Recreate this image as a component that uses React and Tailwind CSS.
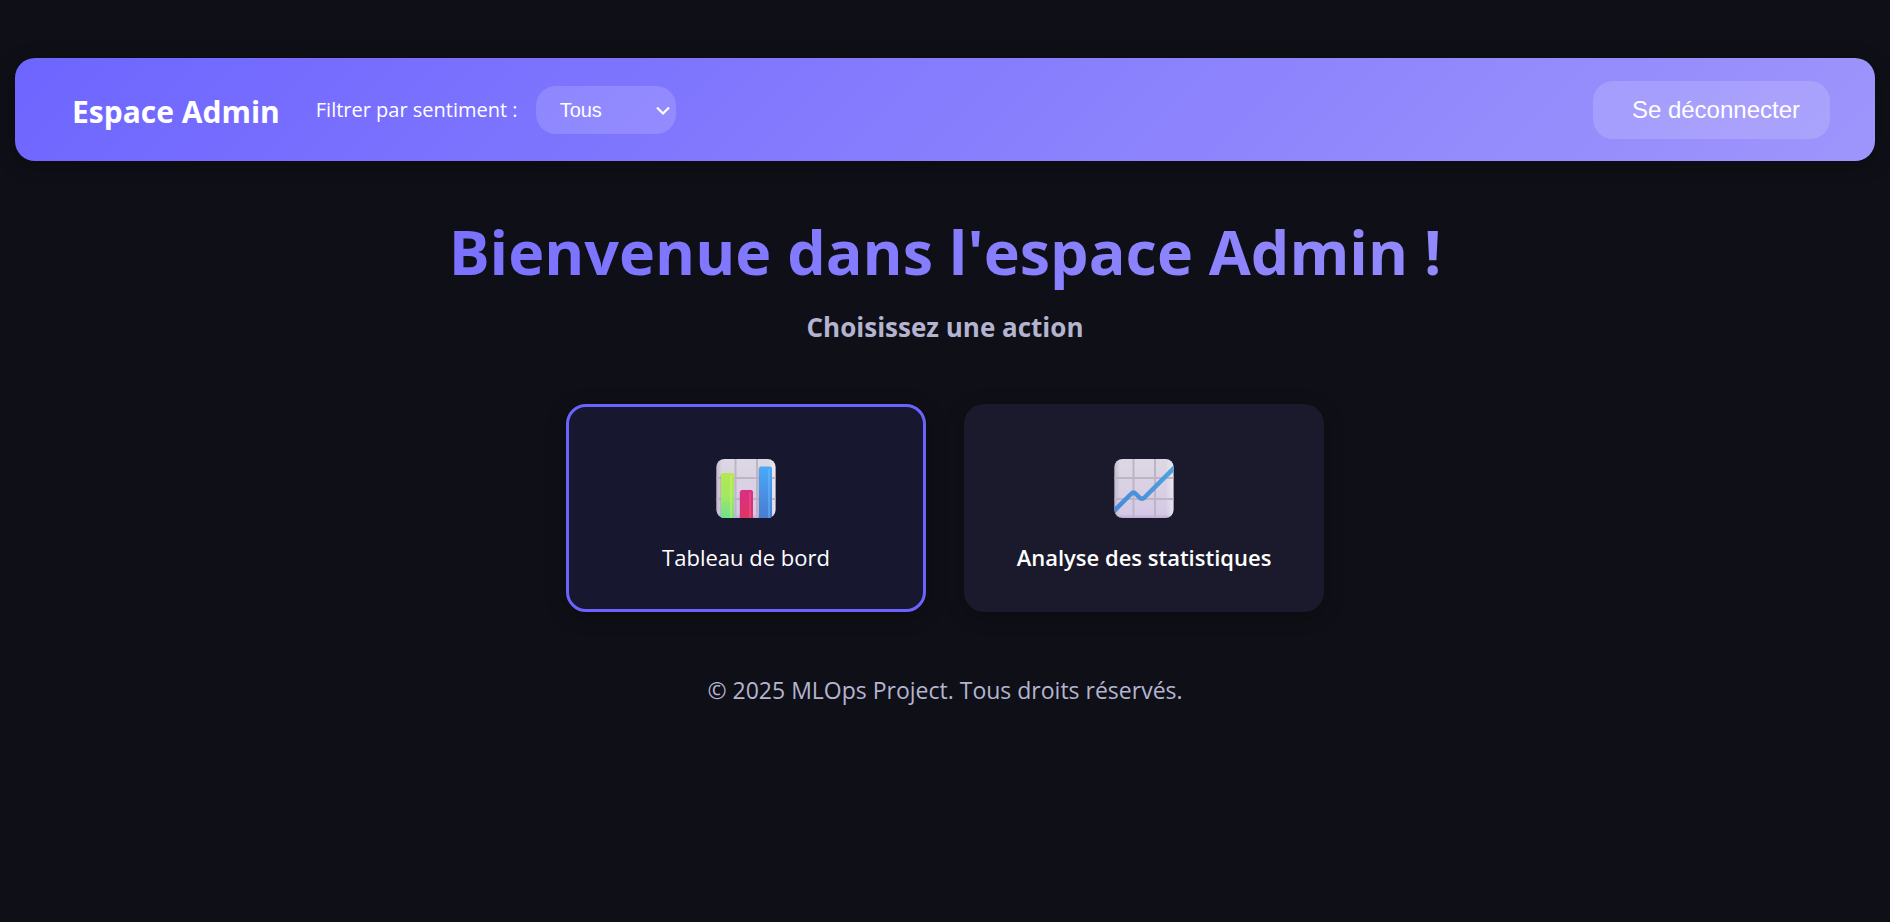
function GridTile({ id, children }) {
  return (
    <svg viewBox="0 0 60 60" className="size-15" aria-hidden="true">
      <defs>
        <linearGradient id={`${id}-bg`} x1="0" y1="0" x2="0" y2="1">
          <stop offset="0" stopColor="#dcd8e2" />
          <stop offset="0.5" stopColor="#d9d0e4" />
          <stop offset="0.92" stopColor="#d5c8e6" />
          <stop offset="1" stopColor="#b9a2d2" />
        </linearGradient>
        <linearGradient id={`${id}-side`} x1="0" y1="0" x2="1" y2="0">
          <stop offset="0" stopColor="#b5adbf" stopOpacity="0.7" />
          <stop offset="0.1" stopColor="#b5adbf" stopOpacity="0" />
          <stop offset="0.86" stopColor="#fff" stopOpacity="0" />
          <stop offset="1" stopColor="#fff" stopOpacity="0.5" />
        </linearGradient>
        <linearGradient id={`${id}-green`} x1="0" y1="14" x2="0" y2="60" gradientUnits="userSpaceOnUse">
          <stop offset="0" stopColor="#b4e84f" />
          <stop offset="0.5" stopColor="#a2e862" />
          <stop offset="1" stopColor="#6fdf8d" />
        </linearGradient>
        <linearGradient id={`${id}-red`} x1="0" y1="31" x2="0" y2="60" gradientUnits="userSpaceOnUse">
          <stop offset="0" stopColor="#d92f86" />
          <stop offset="1" stopColor="#dd3560" />
        </linearGradient>
        <linearGradient id={`${id}-blue`} x1="0" y1="8" x2="0" y2="60" gradientUnits="userSpaceOnUse">
          <stop offset="0" stopColor="#4aa8f8" />
          <stop offset="1" stopColor="#487bd0" />
        </linearGradient>
        <linearGradient id={`${id}-line`} x1="0" y1="1" x2="1" y2="0">
          <stop offset="0" stopColor="#4688d8" />
          <stop offset="1" stopColor="#4fa3de" />
        </linearGradient>
        <clipPath id={`${id}-clip`}>
          <rect x="0.5" y="0" width="59" height="59" rx="8" />
        </clipPath>
      </defs>
      <g clipPath={`url(#${id}-clip)`}>
        <rect width="60" height="60" fill={`url(#${id}-bg)`} />
        <rect width="60" height="60" fill={`url(#${id}-side)`} />
        <path d="M19.5 0V60M41 0V60M0 19H60M0 40H60" stroke="#bdb5c4" strokeWidth="2" />
        {children}
      </g>
    </svg>
  );
}

function BarChartIcon() {
  const bars = [
    { x: 5, y: 14, fill: "green", light: "#d0f47c" },
    { x: 24, y: 31, fill: "red", light: "#ee5f93" },
    { x: 43, y: 7.5, fill: "blue", light: "#6dc0ff" },
  ];
  return (
    <GridTile id="bars">
      {bars.map((b) => (
        <g key={b.fill}>
          <rect x={b.x - 1} y={b.y + 1} width="14" height="60" rx="2.5" fill="#8d83a0" opacity="0.3" />
          <rect x={b.x} y={b.y} width="13" height="60" rx="2.2" fill={`url(#bars-${b.fill})`} />
          <rect x={b.x + 9} y={b.y + 2} width="2" height="60" rx="1" fill={b.light} opacity="0.45" />
        </g>
      ))}
    </GridTile>
  );
}

function LineChartIcon() {
  return (
    <GridTile id="trend">
      <path
        d="M-2 54L17 35Q19.500 32.500 22 35L25.500 38.500Q28 41 30.500 38.500L62 7"
        fill="none"
        stroke="url(#trend-line)"
        strokeWidth="4.5"
      />
    </GridTile>
  );
}

const cardBase =
  "flex w-90 flex-col items-center gap-[22px] rounded-[20px] border-3 px-8 pt-13 pb-9 text-[22px] leading-8 text-white shadow-[0_4px_20px_rgba(0,0,0,0.3)]";

export default function App() {
  return (
    <div className="min-h-screen bg-[#0f0f17] px-[15px] pt-[58px] font-['Open_Sans','Noto_Sans',sans-serif] text-white">
      <header className="flex items-center justify-between rounded-[20px] bg-[linear-gradient(135deg,#6e65ff,#9e95fc)] pt-[23px] pr-[45px] pb-[22px] pl-[57px] shadow-[0_4px_20px_rgba(0,0,0,0.3)]">
        <div className="flex items-center">
          <span className="mr-9 pt-1 text-[30px] leading-10 font-bold">Espace Admin</span>
          <label htmlFor="sentiment" className="mr-[18px] text-[20px] leading-8">
            Filtrer par sentiment :
          </label>
          <div className="relative">
            <select
              id="sentiment"
              className="h-12 w-35 appearance-none rounded-[20px] bg-white/15 pl-6 font-['Liberation_Sans',sans-serif] text-[20px] text-white"
            >
              <option className="text-black">Tous</option>
              <option className="text-black">Positif</option>
              <option className="text-black">Neutre</option>
              <option className="text-black">Négatif</option>
            </select>
            <svg
              viewBox="0 0 14 10"
              className="pointer-events-none absolute top-5 right-1.5 h-2.5 w-3.5"
              fill="none"
              stroke="#fff"
              strokeWidth="2.2"
              aria-hidden="true"
            >
              <path d="M1 1.500L7 7.500L13 1.500" />
            </svg>
          </div>
        </div>
        <button
          type="button"
          className="h-[58px] rounded-[20px] bg-white/15 pr-[30px] pl-[39px] font-['Liberation_Sans',sans-serif] text-2xl"
        >
          Se déconnecter
        </button>
      </header>

      <main className="flex flex-col items-center pt-12">
        <h1 className="w-full bg-[linear-gradient(135deg,#6e65ff,#9e95fc)] bg-clip-text text-center text-[61px] leading-[86px] font-bold text-transparent">
          Bienvenue dans l'espace Admin !
        </h1>
        <h2 className="mt-[14px] text-[26px] leading-9 font-bold text-[#b4b4d0]">Choisissez une action</h2>
        <nav className="mt-[59px] flex flex-wrap justify-center gap-[38px]">
          <a href="#tableau" className={`${cardBase} border-[#6c63ff] bg-[#17172f]`}>
            <BarChartIcon />
            <span>Tableau de bord</span>
          </a>
          <a href="#statistiques" className={`${cardBase} border-transparent bg-[#1a1a2c] font-semibold`}>
            <LineChartIcon />
            <span>Analyse des statistiques</span>
          </a>
        </nav>
      </main>

      <footer className="pt-15 text-center text-[23px] leading-9 text-[#b4b4d0]">
        © 2025 MLOps Project. Tous droits réservés.
      </footer>
    </div>
  );
}
